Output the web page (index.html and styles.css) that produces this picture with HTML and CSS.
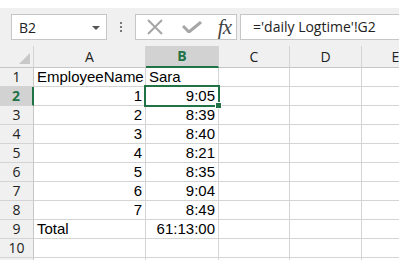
FILE: index.html
```html
<!DOCTYPE html>
<html lang="en">
<head>
    <meta charset="UTF-8">
    <title>daily Logtime</title>
    <link rel="stylesheet" href="styles.css">
</head>
<body>
<div class="top-strip"></div>

<!-- Name box + formula bar -->
<div class="formula-bar">
    <div class="name-box">
        <span>B2</span>
        <span class="arrow"></span>
    </div>
    <div class="grip">
        <span></span><span></span><span></span>
    </div>
    <div class="fx-buttons">
        <svg class="fx-icon" width="18" height="16" viewBox="0 0 18 16">
            <path d="M2 1 L16 15 M16 1 L2 15" stroke="#a6a6a6" stroke-width="2" fill="none"/>
        </svg>
        <svg class="fx-icon" width="20" height="12" viewBox="0 0 20 12">
            <path d="M1 5 L7 11 L19 1" stroke="#a6a6a6" stroke-width="3" fill="none"/>
        </svg>
        <span class="fx">fx</span>
    </div>
    <div class="formula-box">='daily Logtime'!G2</div>
</div>

<!-- Sheet grid -->
<div class="sheet">
    <div class="hdr corner"><span class="tri"></span></div>
    <div class="hdr">A</div>
    <div class="hdr sel-col">B</div>
    <div class="hdr">C</div>
    <div class="hdr">D</div>
    <div class="hdr">E</div>

    <div class="rh">1</div>
    <div class="cell">EmployeeName</div>
    <div class="cell">Sara</div>
    <div class="cell"></div><div class="cell"></div><div class="cell"></div>

    <div class="rh sel-row">2</div>
    <div class="cell num">1</div>
    <div class="cell num active">9:05<span class="handle"></span></div>
    <div class="cell"></div><div class="cell"></div><div class="cell"></div>

    <div class="rh">3</div>
    <div class="cell num">2</div>
    <div class="cell num">8:39</div>
    <div class="cell"></div><div class="cell"></div><div class="cell"></div>

    <div class="rh">4</div>
    <div class="cell num">3</div>
    <div class="cell num">8:40</div>
    <div class="cell"></div><div class="cell"></div><div class="cell"></div>

    <div class="rh">5</div>
    <div class="cell num">4</div>
    <div class="cell num">8:21</div>
    <div class="cell"></div><div class="cell"></div><div class="cell"></div>

    <div class="rh">6</div>
    <div class="cell num">5</div>
    <div class="cell num">8:35</div>
    <div class="cell"></div><div class="cell"></div><div class="cell"></div>

    <div class="rh">7</div>
    <div class="cell num">6</div>
    <div class="cell num">9:04</div>
    <div class="cell"></div><div class="cell"></div><div class="cell"></div>

    <div class="rh">8</div>
    <div class="cell num">7</div>
    <div class="cell num">8:49</div>
    <div class="cell"></div><div class="cell"></div><div class="cell"></div>

    <div class="rh">9</div>
    <div class="cell">Total</div>
    <div class="cell num">61:13:00</div>
    <div class="cell"></div><div class="cell"></div><div class="cell"></div>

    <div class="rh">10</div>
    <div class="cell"></div><div class="cell"></div>
    <div class="cell"></div><div class="cell"></div><div class="cell"></div>

    <!-- row 11 is only a sliver at the bottom edge -->
    <div class="rh"></div>
    <div class="cell"></div><div class="cell"></div>
    <div class="cell"></div><div class="cell"></div><div class="cell"></div>
</div>
</body>
</html>
```

FILE: styles.css
```css
body {
    margin: 0;
    width: 399px;
    height: 260px;
    overflow: hidden;
    background-color: #fff;
    font-family: "Liberation Sans", Arial, sans-serif;
}

.top-strip {
    height: 8px;
    background-color: #fff;
}

/* Formula bar */
.formula-bar {
    display: flex;
    align-items: center;
    height: 38px;
    padding-left: 11px;
    background-color: #f0f0f0;
    box-sizing: border-box;
}

.name-box {
    width: 102px;
    height: 26px;
    box-sizing: border-box;
    border: 1px solid #c6c6c6;
    background-color: #fff;
    display: flex;
    align-items: center;
    justify-content: space-between;
    padding: 0 6px 0 7px;
    font-family: "Open Sans", sans-serif;
    font-size: 14px;
    color: #222;
}

.arrow {
    width: 0;
    height: 0;
    border-left: 4px solid transparent;
    border-right: 4px solid transparent;
    border-top: 4px solid #555;
    margin-top: 2px;
}

.grip {
    width: 30px;
    display: flex;
    flex-direction: column;
    align-items: center;
    gap: 2px;
}

.grip span {
    width: 2px;
    height: 2px;
    background-color: #777;
}

.fx-buttons {
    width: 109px;
    height: 26px;
    box-sizing: border-box;
    border: 1px solid #c6c6c6;
    background-color: #fff;
    display: flex;
    align-items: center;
    padding-left: 10px;
    gap: 18px;
}

.fx {
    font-family: "Liberation Serif", serif;
    font-style: italic;
    font-size: 21px;
    color: #444;
    letter-spacing: -1px;
    margin-left: -2px;
    line-height: 1;
}

.formula-box {
    width: 170px;
    height: 26px;
    margin-left: 3px;
    box-sizing: border-box;
    border: 1px solid #c6c6c6;
    border-right: none;
    background-color: #fff;
    padding-left: 12px;
    font-family: "Open Sans", sans-serif;
    font-size: 14px;
    line-height: 24px;
    color: #222;
    white-space: nowrap;
}

/* Sheet */
.sheet {
    display: grid;
    grid-template-columns: 34px 112px 73px 71px 72px 68px;
    grid-template-rows: 22px repeat(11, 19px);
}

.hdr,
.rh,
.cell {
    box-sizing: border-box;
    border-right: 1px solid #d4d4d4;
    border-bottom: 1px solid #d4d4d4;
}

.hdr {
    background-color: #f0f0f0;
    font-family: "Open Sans", sans-serif;
    font-size: 14px;
    color: #222;
    text-align: center;
    line-height: 22px;
    border-bottom-color: #c6c6c6;
}

.corner {
    position: relative;
}

.tri {
    position: absolute;
    right: 3px;
    bottom: 3px;
    width: 0;
    height: 0;
    border-left: 11px solid transparent;
    border-bottom: 11px solid #c8c8c8;
}

.sel-col {
    background-color: #d2d2d2;
    color: #217346;
    font-weight: bold;
    border-bottom: 2px solid #217346;
    line-height: 19px;
}

.rh {
    background-color: #f0f0f0;
    font-family: "Open Sans", sans-serif;
    font-size: 14px;
    color: #222;
    text-align: center;
    line-height: 18px;
    border-right-color: #c6c6c6;
}

.sel-row {
    background-color: #d2d2d2;
    color: #217346;
    font-weight: bold;
    border-right: 2px solid #217346;
}

.cell {
    font-size: 15px;
    line-height: 18px;
    color: #000;
    padding: 0 3px;
    white-space: nowrap;
}

.num {
    text-align: right;
}

/* Active cell outline */
.active {
    position: relative;
    z-index: 1;
}

.active::after {
    content: "";
    position: absolute;
    left: -2px;
    top: -2px;
    right: -2px;
    bottom: -2px;
    border: 2px solid #217346;
}

.handle {
    position: absolute;
    right: -4px;
    bottom: -4px;
    width: 5px;
    height: 5px;
    background-color: #217346;
    border: 1px solid #fff;
    z-index: 2;
}
```
